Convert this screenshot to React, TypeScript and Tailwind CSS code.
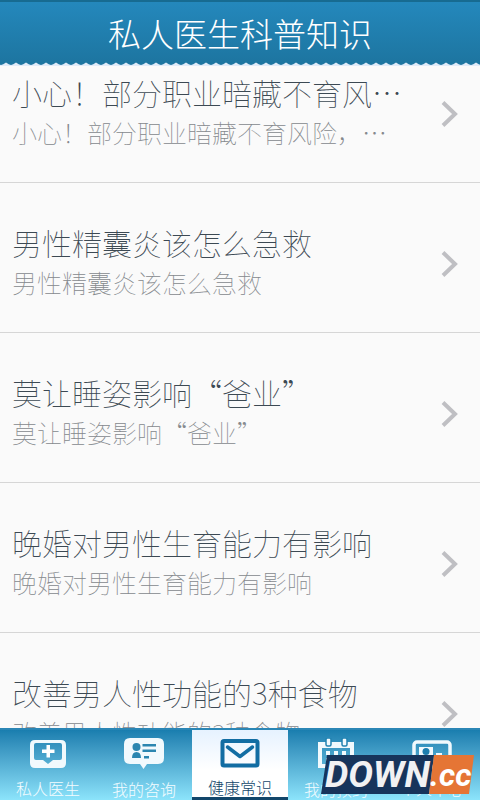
import type { ReactNode } from "react";

const articles = [
  { title: "小心！部分职业暗藏不育风…", summary: "小心！部分职业暗藏不育风险，…" },
  { title: "男性精囊炎该怎么急救", summary: "男性精囊炎该怎么急救" },
  { title: "莫让睡姿影响“爸业”", summary: "莫让睡姿影响“爸业”" },
  { title: "晚婚对男性生育能力有影响", summary: "晚婚对男性生育能力有影响" },
  { title: "改善男人性功能的3种食物", summary: "改善男人性功能的3种食物" },
];

function Chevron() {
  return (
    <svg width="20" height="28" viewBox="0 0 20 28" fill="none" stroke="#bfbfc3" strokeWidth="4" className="shrink-0" aria-hidden="true">
      <path d="M3 2.500 15 14 3 25.500" />
    </svg>
  );
}

function DoctorIcon() {
  return (
    <svg width="36" height="30" viewBox="0 0 36 30" aria-hidden="true">
      <path
        fill="#f1f9fd"
        fillRule="evenodd"
        d="M5 1H31Q36 1 36 6V24Q36 29 31 29H5Q0 29 0 24V6Q0 1 5 1ZM6 4Q4 4 4 6V19Q4 21 6 21H13L18 25 23 21H30Q32 21 32 19V6Q32 4 30 4Z"
      />
      <path fill="#fff" d="M16.500 6h3.500v4.500h4.500V14H20v4.500h-3.500V14H12v-3.500h4.500Z" />
    </svg>
  );
}

function ConsultIcon() {
  return (
    <svg width="40" height="32" viewBox="0 0 40 32" aria-hidden="true">
      <path fill="#f1f9fd" d="M6 0H34Q40 0 40 6V20Q40 26 34 26H23L19.500 31 16 26H6Q0 26 0 20V6Q0 0 6 0Z" />
      <g fill="#2b86b0">
        <circle cx="12.500" cy="9" r="4" />
        <path d="M8 20Q8 14 12.500 14T17 20ZM18.500 6H32v2.500H18.500ZM18.500 11.500H32V14H18.500ZM20 18h5v2.500h-5Z" />
      </g>
    </svg>
  );
}

function MailIcon() {
  return (
    <svg width="40" height="30" viewBox="0 0 40 30" fill="none" stroke="#126da3" aria-hidden="true">
      <rect x="2.500" y="3" width="35" height="24.500" rx="1.500" strokeWidth="4" />
      <path d="M7.500 9 20 18.500 32.500 9" strokeWidth="3.500" strokeLinecap="round" strokeLinejoin="round" />
    </svg>
  );
}

function CalendarIcon() {
  return (
    <svg width="36" height="32" viewBox="0 0 36 32" aria-hidden="true">
      <g fill="#f1f9fd">
        <path fillRule="evenodd" d="M0 4H36V30H0ZM4 10V26H32V10Z" />
        <path d="M8 13h4v4H8ZM16 13h4v4h-4ZM24 13h4v4h-4ZM8 20h4v4H8ZM16 20h4v4h-4Z" />
      </g>
      <g fill="#f1f9fd" stroke="#2383b1" strokeWidth="1.500">
        <rect x="8" y="0" width="5" height="8" rx="1.500" />
        <rect x="24" y="0" width="5" height="8" rx="1.500" />
      </g>
    </svg>
  );
}

function ProfileIcon() {
  return (
    <svg width="40" height="30" viewBox="0 0 40 30" aria-hidden="true">
      <rect x="2" y="3" width="36" height="25" rx="3" fill="none" stroke="#f1f9fd" strokeWidth="3.500" />
      <path fill="#f1f9fd" d="M7 8H21V23H7ZM24 14h6v3h-6ZM24 20h8v2h-8Z" />
      <circle cx="14" cy="12.500" r="3.500" fill="#1d7dae" />
    </svg>
  );
}

const tabs: { label: string; icon: ReactNode; active?: boolean }[] = [
  { label: "私人医生", icon: <DoctorIcon /> },
  { label: "我的咨询", icon: <ConsultIcon /> },
  { label: "健康常识", icon: <MailIcon />, active: true },
  { label: "我的预约", icon: <CalendarIcon /> },
  { label: "个人中心", icon: <ProfileIcon /> },
];

export default function App() {
  return (
    <div
      lang="zh-CN"
      className="relative flex h-screen flex-col overflow-hidden bg-[#fafafa] font-['Noto_Sans_CJK_SC',sans-serif] font-thin"
    >
      <header className="relative z-10 shrink-0">
        <div className="flex h-16 items-center justify-center border-t-2 border-[#176b91] bg-linear-to-b from-[#2488bc] to-[#1d75a0]">
          <h1 className="text-[33px] leading-10 font-light text-white">私人医生科普知识</h1>
        </div>
        <svg width="100%" height="4" className="absolute top-[62px] left-0" aria-hidden="true">
          <defs>
            <pattern id="scallop" x="1" width="10" height="4" patternUnits="userSpaceOnUse">
              <rect width="10" height="4" fill="#1d75a0" />
              <path d="M0 4V3Q2 2.500 5 .5Q8 2.500 10 3V4Z" fill="#e0ebf8" />
            </pattern>
          </defs>
          <rect width="100%" height="4" fill="url(#scallop)" />
        </svg>
      </header>

      <main className="min-h-0 flex-1 overflow-hidden">
        <ul className="-mt-[31px]">
          {articles.map((a) => (
            <li key={a.title}>
              <a href="#article" className="flex h-[150px] items-center justify-between border-b border-[#d6d6d6] pt-3 pr-5 pl-3">
                <div className="min-w-0 pb-1 whitespace-nowrap">
                  <h2 className="text-[30px] leading-10 text-[#3c4953]">{a.title}</h2>
                  <p className="text-[25px] leading-10 text-[#85898d]">{a.summary}</p>
                </div>
                <Chevron />
              </a>
            </li>
          ))}
        </ul>
      </main>

      <nav className="flex h-[72px] shrink-0 border-t-2 border-[#2b86b5] bg-linear-to-b from-[#197eaf] to-[#8ce4fb]">
        {tabs.map((t) => (
          <button
            key={t.label}
            type="button"
            className={
              t.active
                ? "flex flex-1 flex-col items-center border-b-[3px] border-[#12466a] bg-linear-to-b from-[#e6f2ff] to-white to-60% pt-2 text-[#12466a]"
                : "flex flex-1 flex-col items-center pt-2 text-[#f4fcff]"
            }
          >
            <span className="flex h-8 items-center">{t.icon}</span>
            <span className="mt-[7px] text-base leading-6 font-light">{t.label}</span>
          </button>
        ))}
      </nav>

      <div className="absolute right-[6px] bottom-[6px] flex h-[39px] w-[153px] items-center font-['Roboto',sans-serif] font-bold italic">
        <svg className="absolute inset-0" width="153" height="39" viewBox="0 0 153 39" aria-hidden="true">
          <path d="M6 0H113L108 39H0Z" fill="#17345b" />
          <path d="M113 0H153L148 39H108Z" fill="#e57535" />
        </svg>
        <span className="relative w-[109px] pl-1 text-[37px] leading-10 text-[#f1f1f3]">DOWN</span>
        <span className="relative text-[32px] leading-10 text-white">.cc</span>
      </div>
    </div>
  );
}
